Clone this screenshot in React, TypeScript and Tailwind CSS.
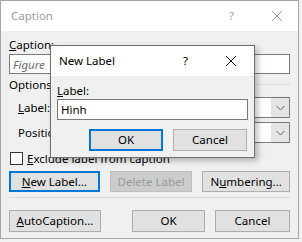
import React from 'react';

const font = { fontFamily: '"Noto Sans", "Open Sans", sans-serif' };

function Btn({
  children,
  className = '',
  primary = false,
  disabled = false,
}: {
  children: React.ReactNode;
  className?: string;
  primary?: boolean;
  disabled?: boolean;
}) {
  const base = disabled
    ? 'border border-[#bfbfbf] bg-[#cccccc] text-[#9a9a9a]'
    : primary
      ? 'border-2 border-[#0078d7] bg-[#e1e1e1] text-black'
      : 'border border-[#adadad] bg-[#e1e1e1] text-black';
  return (
    <div className={`flex items-center justify-center text-[11.5px] leading-none ${base} ${className}`}>
      {children}
    </div>
  );
}

function Combo({ className = '' }: { className?: string }) {
  return (
    <div className={`flex h-[21px] border border-[#7a7a7a] bg-white ${className}`}>
      <div className="flex-1" />
      <div className="flex w-[18px] items-center justify-center bg-[#e5e5e5]">
        <svg width="9" height="6" viewBox="0 0 9 6" fill="none" stroke="#606060" strokeWidth="1">
          <path d="M0.5 1 L4.5 5 L8.5 1" />
        </svg>
      </div>
    </div>
  );
}

export default function App() {
  return (
    <div className="relative h-[242px] w-[302px] overflow-hidden bg-[#f2f2f2]" style={font}>
      {/* Caption dialog (inactive) */}
      <div className="flex h-[239px] w-[299px] flex-col border border-[#a6a6a6] bg-[#f0f0f0]">
        <div className="flex h-[30px] items-center bg-white text-[11.5px] text-[#9d9d9d]">
          <span className="pl-[10px]">Caption</span>
          <span className="ml-auto mr-[38px]">?</span>
          <svg className="mr-[16px]" width="10" height="10" viewBox="0 0 10 10" stroke="#9d9d9d" strokeWidth="1">
            <path d="M0 0 L10 10 M10 0 L0 10" />
          </svg>
        </div>

        <div className="flex flex-col px-[8px] text-[11.5px] leading-[15px] text-black">
          <div className="mt-[6px]">
            <span className="underline">C</span>aption:
          </div>
          <div className="mt-[2px] flex h-[20px] items-center border border-[#7a7a7a] bg-white pl-[3px] italic text-[#6d6d6d]">
            Figure
          </div>

          <div className="mt-[3px] flex items-center gap-[4px]">
            <span>Options</span>
            <div className="h-px flex-1 bg-[#dcdcdc]" />
          </div>

          <div className="mt-[5px] flex items-center pl-[9px]">
            <span className="w-[58px]">
              <span className="underline">L</span>abel:
            </span>
            <Combo className="flex-1" />
          </div>
          <div className="mt-[4px] flex items-center pl-[9px]">
            <span className="w-[58px]">Position:</span>
            <Combo className="flex-1" />
          </div>

          <div className="mt-[8px] flex items-center gap-[4px] pl-[1px]">
            <div className="h-[13px] w-[13px] border border-[#333333] bg-white" />
            <span>
              <span className="underline">E</span>xclude label from caption
            </span>
          </div>

          <div className="mt-[5px] flex gap-[10px]">
            <Btn primary className="h-[21px] w-[92px]">
              <span className="underline">N</span>ew Label...
            </Btn>
            <Btn disabled className="h-[21px] w-[84px]">
              Delete Label
            </Btn>
            <Btn className="h-[21px] w-[89px]">
              N<span className="underline">u</span>mbering...
            </Btn>
          </div>

          <div className="mt-[5px] h-px bg-[#dcdcdc]" />

          <div className="mt-[12px] flex">
            <Btn className="h-[22px] w-[92px]">
              <span className="underline">A</span>utoCaption...
            </Btn>
            <Btn className="ml-auto h-[22px] w-[73px]">OK</Btn>
            <Btn className="ml-[10px] h-[22px] w-[75px]">Cancel</Btn>
          </div>
        </div>
      </div>

      {/* New Label dialog */}
      <div className="absolute left-[50px] top-[45px] flex h-[113px] w-[205px] flex-col border border-[#6e6e6e] bg-[#f0f0f0] shadow-[3px_3px_6px_rgba(0,0,0,0.25)]">
        <div className="flex h-[30px] items-center bg-white text-[11.5px] text-black">
          <span className="pl-[8px]">New Label</span>
          <span className="ml-auto mr-[38px]">?</span>
          <svg className="mr-[18px]" width="10" height="10" viewBox="0 0 10 10" stroke="#111111" strokeWidth="1">
            <path d="M0 0 L10 10 M10 0 L0 10" />
          </svg>
        </div>
        <div className="flex flex-col px-[6px] text-[11.5px] leading-[15px] text-black">
          <div className="mt-[7px]">
            <span className="underline">L</span>abel:
          </div>
          <div className="mt-[1px] flex h-[21px] items-center border border-[#7a7a7a] bg-white pl-[3px]">
            Hình
          </div>
          <div className="mt-[9px] flex justify-end gap-[10px] pr-[1px]">
            <Btn primary className="h-[22px] w-[74px]">OK</Btn>
            <Btn className="h-[22px] w-[74px]">Cancel</Btn>
          </div>
        </div>
      </div>
    </div>
  );
}
